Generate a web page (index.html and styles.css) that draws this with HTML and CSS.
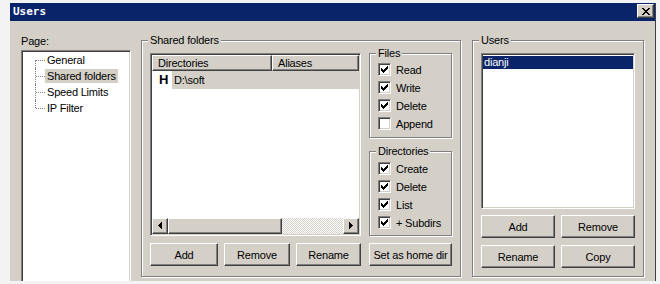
FILE: index.html
```html
<!DOCTYPE html>
<html>
<head>
<meta charset="utf-8">
<link rel="stylesheet" href="styles.css">
</head>
<body>
<div class="window">
  <div class="titlebar">
    <span class="title">Users</span>
    <span class="close"><svg width="8" height="7" viewBox="0 0 8 7"><path d="M0 0h2v1h-2z M6 0h2v1h-2z M1 1h2v1h-2z M5 1h2v1h-2z M2 2h4v1h-4z M3 3h2v1h-2z M2 4h4v1h-4z M1 5h2v1h-2z M5 5h2v1h-2z M0 6h2v1h-2z M6 6h2v1h-2z" fill="#000"/></svg></span>
  </div>
  <div class="main">
    <div class="pagecol">
      <div class="caption">Page:</div>
      <div class="tree sunken">
        <div class="node first"><span class="branch"></span><span class="lbl">General</span></div>
        <div class="node"><span class="branch"></span><span class="lbl sel">Shared folders</span></div>
        <div class="node"><span class="branch"></span><span class="lbl">Speed Limits</span></div>
        <div class="node last"><span class="branch"></span><span class="lbl">IP Filter</span></div>
      </div>
    </div>

    <div class="group shared">
      <div class="legend">Shared folders</div>
      <div class="shared-top">
        <div class="listview sunken">
          <div class="lv-header">
            <div class="hcell dircol">Directories</div>
            <div class="hcell aliascol">Aliases</div>
          </div>
          <div class="lv-row"><span class="home">H</span><span class="dirname">D:\soft</span></div>
          <div class="lv-fill"></div>
          <div class="hscroll">
            <div class="sbtn"><svg width="14" height="14" viewBox="0 0 14 14"><path d="M5 6h1v1h-1z M6 5h1v3h-1z M7 4h1v5h-1z M8 3h1v7h-1z" fill="#000"/></svg></div>
            <div class="thumb"></div>
            <div class="track"></div>
            <div class="sbtn"><svg width="14" height="14" viewBox="0 0 14 14"><path d="M5 3h1v7h-1z M6 4h1v5h-1z M7 5h1v3h-1z M8 6h1v1h-1z" fill="#000"/></svg></div>
          </div>
        </div>
        <div class="perm-col">
          <div class="group files">
            <div class="legend">Files</div>
            <div class="cb-list">
              <div class="cb-row"><span class="cb on"><svg width="9" height="9" viewBox="0 0 9 9"><path d="M1 3h1v3h-1z M2 4h1v3h-1z M3 5h1v3h-1z M4 4h1v3h-1z M5 3h1v3h-1z M6 2h1v3h-1z M7 1h1v3h-1z" fill="#000"/></svg></span>Read</div>
              <div class="cb-row"><span class="cb on"><svg width="9" height="9" viewBox="0 0 9 9"><path d="M1 3h1v3h-1z M2 4h1v3h-1z M3 5h1v3h-1z M4 4h1v3h-1z M5 3h1v3h-1z M6 2h1v3h-1z M7 1h1v3h-1z" fill="#000"/></svg></span>Write</div>
              <div class="cb-row"><span class="cb on"><svg width="9" height="9" viewBox="0 0 9 9"><path d="M1 3h1v3h-1z M2 4h1v3h-1z M3 5h1v3h-1z M4 4h1v3h-1z M5 3h1v3h-1z M6 2h1v3h-1z M7 1h1v3h-1z" fill="#000"/></svg></span>Delete</div>
              <div class="cb-row"><span class="cb"></span>Append</div>
            </div>
          </div>
          <div class="group dirs">
            <div class="legend">Directories</div>
            <div class="cb-list">
              <div class="cb-row"><span class="cb on"><svg width="9" height="9" viewBox="0 0 9 9"><path d="M1 3h1v3h-1z M2 4h1v3h-1z M3 5h1v3h-1z M4 4h1v3h-1z M5 3h1v3h-1z M6 2h1v3h-1z M7 1h1v3h-1z" fill="#000"/></svg></span>Create</div>
              <div class="cb-row"><span class="cb on"><svg width="9" height="9" viewBox="0 0 9 9"><path d="M1 3h1v3h-1z M2 4h1v3h-1z M3 5h1v3h-1z M4 4h1v3h-1z M5 3h1v3h-1z M6 2h1v3h-1z M7 1h1v3h-1z" fill="#000"/></svg></span>Delete</div>
              <div class="cb-row"><span class="cb on"><svg width="9" height="9" viewBox="0 0 9 9"><path d="M1 3h1v3h-1z M2 4h1v3h-1z M3 5h1v3h-1z M4 4h1v3h-1z M5 3h1v3h-1z M6 2h1v3h-1z M7 1h1v3h-1z" fill="#000"/></svg></span>List</div>
              <div class="cb-row"><span class="cb on"><svg width="9" height="9" viewBox="0 0 9 9"><path d="M1 3h1v3h-1z M2 4h1v3h-1z M3 5h1v3h-1z M4 4h1v3h-1z M5 3h1v3h-1z M6 2h1v3h-1z M7 1h1v3h-1z" fill="#000"/></svg></span>+ Subdirs</div>
            </div>
          </div>
        </div>
      </div>
      <div class="btn-row">
        <div class="btn w-add">Add</div>
        <div class="btn w-remove">Remove</div>
        <div class="btn w-rename">Rename</div>
        <div class="btn w-home">Set as home dir</div>
      </div>
    </div>

    <div class="group users">
      <div class="legend">Users</div>
      <div class="listbox sunken">
        <div class="lb-item sel">dianji</div>
      </div>
      <div class="ubtn-row">
        <div class="btn w-ubtn">Add</div>
        <div class="btn w-ubtn">Remove</div>
      </div>
      <div class="ubtn-row second">
        <div class="btn w-ubtn">Rename</div>
        <div class="btn w-ubtn">Copy</div>
      </div>
    </div>
  </div>
</div>
</body>
</html>
```

FILE: styles.css
```css
* { box-sizing: border-box; }
html, body { margin: 0; padding: 0; }
body {
  background: #f3f3f3;
  width: 660px;
  height: 284px;
  overflow: hidden;
  font-family: "Liberation Sans", Arial, sans-serif;
  font-size: 11px;
  letter-spacing: -0.2px;
  color: #000;
}
.window {
  margin: 3px 0 0 10px;
  width: 646px;
  height: 278px;
  background: #d4d0c8;
  border-right: 1px solid #404040;
  overflow: hidden;
}
.titlebar {
  height: 18px;
  background: #0a246a;
  display: flex;
  align-items: flex-start;
  justify-content: space-between;
}
.title {
  font-family: "DejaVu Sans Mono", monospace;
  font-weight: bold;
  font-size: 11px;
  letter-spacing: 0;
  color: #fff;
  line-height: 18px;
  padding-left: 3px;
}
.close {
  width: 17px;
  height: 14px;
  margin: 1px 1px 0 0;
  background: #d4d0c8;
  border: 1px solid;
  border-color: #fff #404040 #404040 #fff;
  box-shadow: inset -1px -1px 0 #808080;
  display: flex;
  align-items: center;
  justify-content: center;
}
.close svg { display: block; }

.main {
  display: flex;
  align-items: flex-start;
  padding: 14px 0 0 11px;
}
.pagecol { width: 110px; margin-right: 10px; }
.caption { line-height: 13px; height: 13px; }

.sunken {
  border: 1px solid;
  border-color: #808080 #fff #fff #808080;
  padding: 1px;
  box-shadow: inset 1px 1px 0 #404040, inset -1px -1px 0 #d4d0c8;
  background: #fff;
}
.tree {
  margin-top: 2px;
  width: 110px;
  height: 240px;
}
.node {
  display: flex;
  align-items: center;
  height: 16px;
  padding-left: 12px;
}
.branch {
  position: relative;
  width: 10px;
  height: 16px;
  flex: none;
}
.branch::before {
  content: "";
  position: absolute;
  left: 0;
  top: 0;
  bottom: 0;
  border-left: 1px dotted #808080;
}
.first .branch::before { top: 8px; }
.last .branch::before { bottom: 8px; }
.branch::after {
  content: "";
  position: absolute;
  left: 1px;
  top: 8px;
  width: 9px;
  border-top: 1px dotted #808080;
}
.lbl {
  line-height: 13px;
  padding: 1px 2px 0 2px;
  white-space: nowrap;
}
.lbl.sel { background: #d4d0c8; }

.group {
  border: 1px solid #808080;
  box-shadow: inset 1px 1px 0 #fff, 1px 1px 0 #fff;
  padding: 0 8px;
}
.legend {
  margin: -7px 0 0 -2px;
  padding: 0 2px;
  line-height: 13px;
  height: 13px;
  background: #d4d0c8;
  width: fit-content;
  white-space: nowrap;
}
.shared {
  margin-top: 5px;
  width: 320px;
  padding-bottom: 10px;
}
.shared-top {
  display: flex;
  gap: 8px;
  margin-top: 6px;
  height: 183px;
}
.listview {
  width: 211px;
  height: 183px;
  display: flex;
  flex-direction: column;
}
.raised {
}
.lv-header { display: flex; height: 16px; flex: none; }
.hcell {
  height: 16px;
  line-height: 14px;
  padding-left: 5px;
  background: #d4d0c8;
  border: 1px solid;
  border-color: #fff #404040 #404040 #fff;
  box-shadow: inset -1px -1px 0 #808080;
}
.dircol { width: 120px; }
.aliascol { flex: 1; }
.lv-row { display: flex; height: 18px; line-height: 18px; flex: none; }
.home {
  width: 20px;
  padding-left: 7px;
  font-weight: bold;
  font-size: 13px;
  letter-spacing: 0;
}
.dirname { flex: 1; background: #d4d0c8; padding-left: 2px; }
.lv-fill { flex: 1; }
.hscroll { display: flex; height: 16px; flex: none; }
.sbtn, .thumb {
  height: 16px;
  background: #d4d0c8;
  border: 1px solid;
  border-color: #fff #404040 #404040 #fff;
  box-shadow: inset -1px -1px 0 #808080;
}
.sbtn { width: 16px; }
.sbtn svg { display: block; }
.thumb { width: 114px; }
.track {
  flex: 1;
  background: repeating-conic-gradient(#fff 0 25%, #d4d0c8 0 50%) 0 0 / 2px 2px;
}

.perm-col { width: 83px; display: flex; flex-direction: column; }
.files { height: 85px; }
.files .cb-list { padding-top: 1px; }
.dirs { height: 85px; margin-top: 13px; }
.dirs .cb-list { padding-top: 2px; }
.cb-row {
  display: flex;
  align-items: flex-start;
  height: 18px;
  line-height: 18px;
  white-space: nowrap;
}
.cb {
  flex: none;
  width: 13px;
  height: 13px;
  margin: 2px 5px 0 0;
}
.cb {
  border: 1px solid;
  border-color: #808080 #fff #fff #808080;
  padding: 1px;
  box-shadow: inset 1px 1px 0 #404040, inset -1px -1px 0 #d4d0c8;
  background: #fff;
}
.cb svg { display: block; }

.btn-row { display: flex; margin-top: 7px; }
.btn {
  height: 23px;
  background: #d4d0c8;
  border: 1px solid;
  border-color: #fff #404040 #404040 #fff;
  box-shadow: inset -1px -1px 0 #808080;
  display: flex;
  align-items: center;
  justify-content: center;
  white-space: nowrap;
}
.w-add { width: 68px; margin-right: 6px; }
.w-remove { width: 66px; margin-right: 6px; }
.w-rename { width: 65px; margin-right: 8px; }
.w-home { width: 83px; }

.users {
  margin-top: 5px;
  margin-left: 11px;
  width: 172px;
  padding-bottom: 8px;
}
.listbox {
  margin-top: 6px;
  height: 156px;
  padding-top: 2px;
}
.lb-item { line-height: 13px; height: 13px; padding-left: 1px; }
.lb-item.sel { background: #0a246a; color: #fff; }
.ubtn-row { display: flex; justify-content: space-between; margin-top: 6px; }
.ubtn-row.second { margin-top: 7px; }
.w-ubtn { width: 74px; }
```
